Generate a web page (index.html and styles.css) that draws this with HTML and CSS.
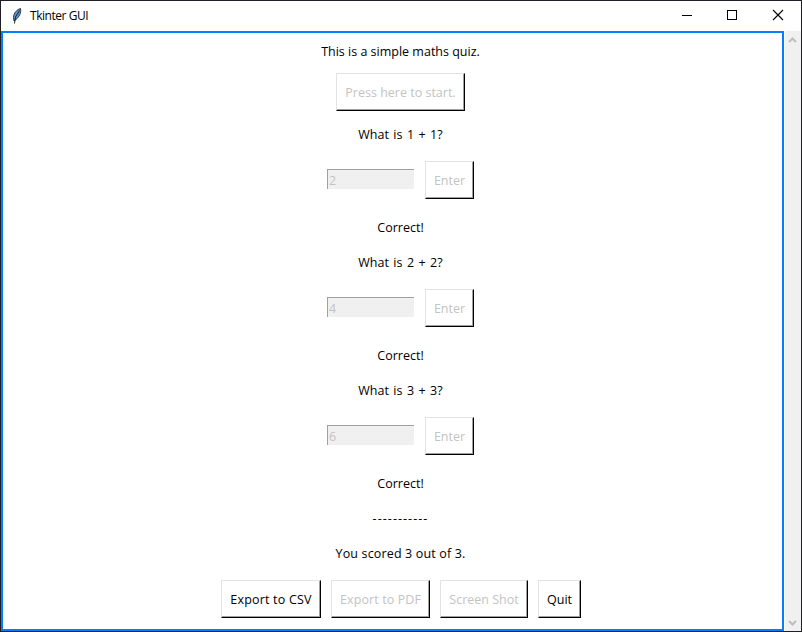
FILE: index.html
```html
<!DOCTYPE html>
<html lang="en">
<head>
<meta charset="utf-8">
<title>Tkinter GUI</title>
<link rel="stylesheet" href="styles.css">
</head>
<body>
<div class="window">
  <header class="titlebar">
    <svg class="feather" width="12" height="18" viewBox="0 0 12 18">
      <path d="M9.5 1.500C6 2.500 2.500 6 2.500 10.500L3 14L5 12.500C8 10 10.500 6 9.500 1.500Z" fill="#5b93cf" stroke="#1c2833" stroke-width=".9"/>
      <path d="M8.500 3.500L4.500 10L3.500 16.500" fill="none" stroke="#111" stroke-width=".9"/>
    </svg>
    <span class="caption">Tkinter GUI</span>
    <div class="controls">
      <svg width="46" height="30" viewBox="0 0 46 30"><path d="M18 14.500H28" stroke="#000"/></svg>
      <svg width="46" height="30" viewBox="0 0 46 30"><rect x="17.500" y="9.500" width="9" height="9" fill="none" stroke="#000"/></svg>
      <svg width="46" height="30" viewBox="0 0 46 30"><path d="M17 9L27 19M27 9L17 19" stroke="#000" stroke-width="1.100"/></svg>
    </div>
  </header>
  <div class="body">
    <main class="canvas">
      <p class="label intro">This is a simple maths quiz.</p>
      <button class="button start" disabled>Press here to start.</button>
      <section class="question first">
        <p class="label prompt">What is 1 + 1?</p>
        <div class="answer"><div class="entry">2</div><button class="button enter" disabled>Enter</button></div>
        <p class="label result">Correct!</p>
      </section>
      <section class="question">
        <p class="label prompt">What is 2 + 2?</p>
        <div class="answer"><div class="entry">4</div><button class="button enter" disabled>Enter</button></div>
        <p class="label result">Correct!</p>
      </section>
      <section class="question">
        <p class="label prompt">What is 3 + 3?</p>
        <div class="answer"><div class="entry">6</div><button class="button enter" disabled>Enter</button></div>
        <p class="label result">Correct!</p>
      </section>
      <p class="label rule">-----------</p>
      <p class="label score">You scored 3 out of 3.</p>
      <div class="actions">
        <button class="button csv">Export to CSV</button>
        <button class="button pdf" disabled>Export to PDF</button>
        <button class="button shot" disabled>Screen Shot</button>
        <button class="button quit">Quit</button>
      </div>
    </main>
    <div class="scrollbar">
      <svg width="16" height="17" viewBox="0 0 16 17"><path d="M4 11L7.500 7.500L11 11" fill="none" stroke="#bfbfbf" stroke-width="2.200"/></svg>
      <svg width="16" height="17" viewBox="0 0 16 17"><path d="M4 7L7.500 10.500L11 7" fill="none" stroke="#bfbfbf" stroke-width="2.200"/></svg>
    </div>
  </div>
</div>
</body>
</html>
```
FILE: styles.css
```css
* { box-sizing: border-box; }
body { margin: 0; font: 12.5px/20px "Open Sans", "Noto Sans", sans-serif; color: #000; }
.window { width: 802px; height: 632px; border: 1px solid #201f27; background: #fff; display: flex; flex-direction: column; }
.titlebar { height: 30px; display: flex; align-items: center; padding-left: 10px; }
.feather { margin-right: 7px; }
.caption { font-size: 12px; letter-spacing: -0.45px; }
.controls { display: flex; height: 30px; margin-left: auto; margin-right: -1px; }
.body { flex: 1; display: flex; }
.canvas { width: 783px; border: 2px solid #0080ff; display: flex; flex-direction: column; align-items: center; padding: 8px 0 0 16px; }
.label { margin: 0; height: 20px; line-height: 22px; white-space: nowrap; }
.button { height: 38px; padding: 2px 0 0; font: inherit; white-space: nowrap; color: #000; background: #fff; border: 1px solid #e3e3e3; border-right-color: #000; border-bottom-color: #000; box-shadow: inset -1px -1px #a0a0a0; border-radius: 0; }
.button:disabled { color: #c3c3c3; }
.start { width: 129px; margin-top: 12px; }
.question { display: flex; flex-direction: column; align-items: center; margin-top: 15px; }
.first { margin-top: 13px; }
.prompt { word-spacing: 1.2px; }
.answer { display: flex; align-items: center; gap: 11px; margin: 17px 0 18px; }
.entry { width: 87px; height: 20px; margin-bottom: 2px; padding-left: 1px; line-height: 22px; background: #f0f0f0; border: solid #a0a0a0; border-width: 1px 0 0 1px; color: #c3c3c3; }
.enter { width: 49px; }
.rule, .score { margin-top: 15px; }
.rule { letter-spacing: 1.05px; }
.score { letter-spacing: 0.15px; }
.actions { display: flex; gap: 10px; width: 361px; padding-left: 1px; margin-top: 17px; }
.csv { width: 100px; letter-spacing: 0.2px; }
.pdf { width: 99px; letter-spacing: 0.1px; }
.shot { width: 88px; }
.quit { width: 43px; }
.scrollbar { width: 16px; margin-left: 1px; background: #f0f0f0; display: flex; flex-direction: column; justify-content: space-between; }
```
